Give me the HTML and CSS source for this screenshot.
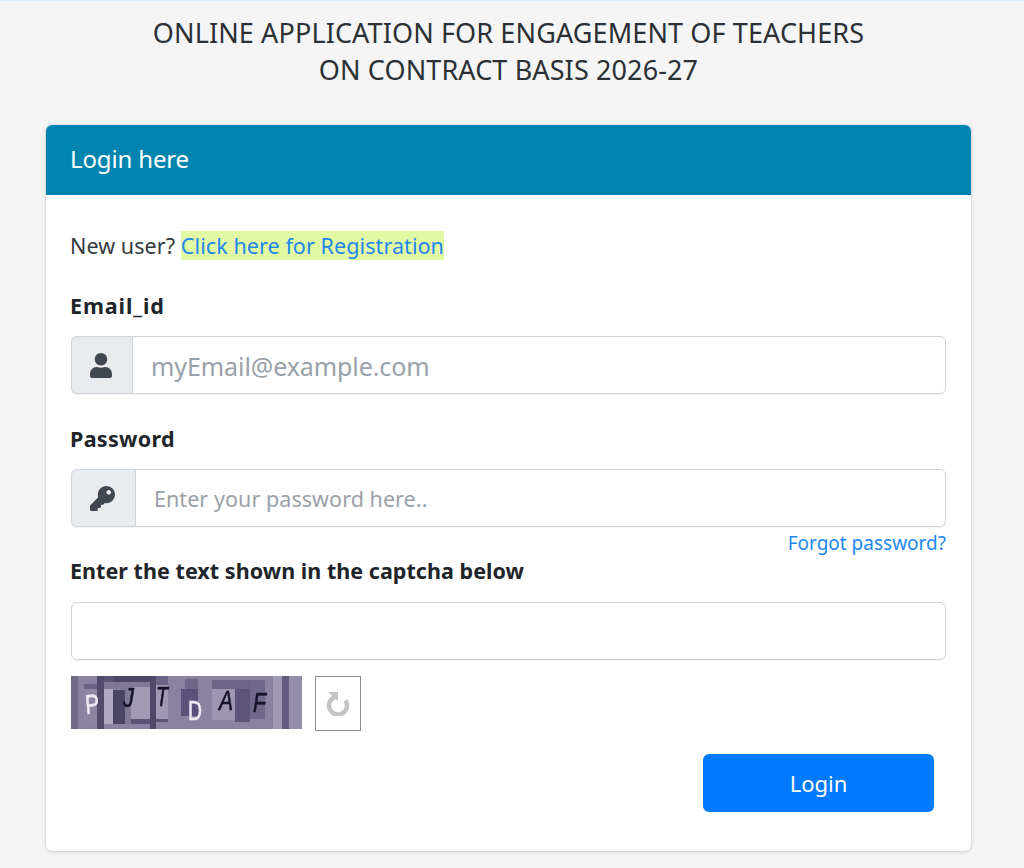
FILE: index.html
```html
<!DOCTYPE html>
<html lang="en">
<head>
<meta charset="utf-8">
<title>Login</title>
<link rel="stylesheet" href="styles.css">
</head>
<body>
<main class="page">
  <h1 class="title">ONLINE APPLICATION FOR ENGAGEMENT OF TEACHERS<br>ON CONTRACT BASIS 2026-27</h1>
  <section class="card">
    <header class="card-head">Login here</header>
    <form class="card-body">
      <p class="newuser">New user? <a class="reg" href="#">Click here for Registration</a></p>
      <label class="lbl lbl-email">Email_id</label>
      <div class="group">
        <span class="addon addon-user">
          <svg width="22" height="25" viewBox="0 0 448 512"><path fill="#3f4850" d="M224 256c70.700 0 128-57.300 128-128S294.700 0 224 0 96 57.300 96 128s57.300 128 128 128zm89.600 32h-16.700c-22.200 10.200-46.900 16-72.900 16s-50.600-5.800-72.900-16h-16.700C60.200 288 0 348.200 0 422.400V464c0 26.500 21.500 48 48 48h352c26.500 0 48-21.500 48-48v-41.600c0-74.200-60.200-134.400-134.400-134.400z"/></svg>
        </span>
        <input class="field field-email" placeholder="myEmail@example.com">
      </div>
      <label class="lbl lbl-pass">Password</label>
      <div class="group">
        <span class="addon addon-key">
          <svg width="25" height="25" viewBox="0 0 512 512"><path fill="#3f4850" d="M512 176.001C512 273.203 433.202 352 336 352c-11.220 0-22.190-1.062-32.827-3.069l-24.012 27.014A23.999 23.999 0 0 1 261.223 384H224v40c0 13.255-10.745 24-24 24h-40v40c0 13.255-10.745 24-24 24H24c-13.255 0-24-10.745-24-24v-78.059c0-6.365 2.529-12.470 7.029-16.971l161.802-161.802C163.108 213.814 160 195.271 160 176 160 78.798 238.797.001 335.999 0 433.488-.001 512 78.511 512 176.001zM336 128c0 26.510 21.490 48 48 48s48-21.490 48-48-21.490-48-48-48-48 21.490-48 48z"/></svg>
        </span>
        <input class="field field-pass" placeholder="Enter your password here..">
      </div>
      <div class="forgot-row"><a class="forgot" href="#">Forgot password?</a></div>
      <label class="lbl lbl-captcha">Enter the text shown in the captcha below</label>
      <input class="field field-captcha">
      <div class="captcha-row">
        <svg class="captcha" width="231" height="53" viewBox="0 0 231 53">
          <rect width="231" height="53" fill="#8a82a0"/>
          <rect x="0" width="7" height="53" fill="#6f6886"/>
          <rect x="13" y="8" width="14" height="5" fill="#6a6385"/>
          <rect x="13" y="13" width="14" height="33" fill="#8d85a2"/>
          <rect x="33" y="6" width="46" height="7" fill="#7f7896"/>
          <rect x="26" y="0" width="16" height="6" fill="#5a5375"/>
          <rect x="42" y="0" width="37" height="6" fill="#4d4667"/>
          <rect x="26" y="0" width="7" height="53" fill="#514a6a"/>
          <rect x="33" y="13" width="9" height="35" fill="#b0a9c0"/>
          <rect x="42" y="14" width="12" height="34" fill="#4b4565"/>
          <rect x="54" y="13" width="6" height="35" fill="#807996"/>
          <rect x="60" y="11" width="19" height="32" fill="#a19ab5"/>
          <rect x="60" y="43" width="19" height="5" fill="#5b5476"/>
          <rect x="79" y="0" width="6" height="53" fill="#4f4869"/>
          <rect x="85" y="0" width="12" height="9" fill="#6a6385"/>
          <rect x="85" y="9" width="12" height="34" fill="#a098b4"/>
          <rect x="85" y="43" width="12" height="3" fill="#5b5476"/>
          <rect x="114" y="3" width="13" height="10" fill="#6f6788"/>
          <rect x="110" y="13" width="17" height="27" fill="#5a5278"/>
          <rect x="141" y="4" width="38" height="9" fill="#6d6586"/>
          <rect x="141" y="13" width="23" height="31" fill="#9d95b1"/>
          <rect x="164" y="13" width="15" height="33" fill="#5d5578"/>
          <rect x="179" y="4" width="15" height="39" fill="#6f6889"/>
          <rect x="202" y="0" width="9" height="53" fill="#a19ab4"/>
          <rect x="211" y="0" width="7" height="53" fill="#655d80"/>
          <rect x="218" y="0" width="13" height="53" fill="#958eab"/>
          <text class="cap-t cap-w" x="15" y="38" textLength="14" lengthAdjust="spacingAndGlyphs" transform="rotate(-5 15 38)">P</text>
          <text class="cap-t cap-d cap-i" x="52" y="31" textLength="11" lengthAdjust="spacingAndGlyphs">J</text>
          <text class="cap-t cap-d cap-i" x="85" y="30" textLength="12" lengthAdjust="spacingAndGlyphs">T</text>
          <text class="cap-t cap-w" x="117" y="44" textLength="14" lengthAdjust="spacingAndGlyphs">D</text>
          <text class="cap-t cap-d cap-i" x="148" y="34" textLength="14" lengthAdjust="spacingAndGlyphs">A</text>
          <text class="cap-t cap-d cap-i" x="182" y="36" textLength="13" lengthAdjust="spacingAndGlyphs">F</text>
        </svg>
        <button class="refresh" type="button" aria-label="Refresh captcha">
          <svg class="refresh-icon" width="24" height="24" viewBox="0 0 24 24">
            <path class="refresh-arc" d="M19.400 8.300A9 9 0 1 1 11 4.500"/>
            <path class="refresh-head" d="M2 0h10v9z"/>
          </svg>
        </button>
      </div>
      <div class="submit-row"><button class="login" type="button">Login</button></div>
    </form>
  </section>
</main>
</body>
</html>
```

FILE: styles.css
```css
* { box-sizing: border-box; }
html, body { margin: 0; padding: 0; }
body {
  height: 868px;
  overflow: hidden;
  background: #f5f5f5;
  border-top: 1px solid #d6f0fb;
  font-family: "Noto Sans", "Open Sans", sans-serif;
  color: #212529;
}
.page { padding: 0 53px 0 46px; }
.title {
  margin: 13px 0 0;
  height: 111px;
  text-align: center;
  font-weight: 400;
  font-size: 27px;
  line-height: 37px;
  color: #2b3035;
  letter-spacing: 0.12px;
}
.card {
  background: #fff;
  border-radius: 6px;
  box-shadow: 0 0 2px rgba(0,0,0,.12), 0 1px 4px rgba(0,0,0,.15);
  height: 726px;
  overflow: hidden;
}
.card-head {
  height: 70px;
  background: #0284b0;
  color: #fff;
  font-size: 24px;
  line-height: 68px;
  padding-left: 24px;
  letter-spacing: -0.15px;
}
.card-body { padding: 0 25px; display: flex; flex-direction: column; }
.newuser {
  margin: 37px 0 0 -1px;
  font-size: 21.500px;
  line-height: 28px;
  letter-spacing: 0.08px;
  color: #343a40;
}
.reg { background: #e2f9a4; color: #1e88f0; text-decoration: none; }
.lbl {
  display: block;
  margin-left: -1px;
  font-weight: 700;
  font-size: 21.500px;
  line-height: 28px;
  letter-spacing: 0.04px;
  color: #212529;
}
.lbl-email { margin-top: 32px; letter-spacing: 0.9px; }
.lbl-pass { margin-top: 31px; letter-spacing: 0.3px; }
.lbl-captcha { margin-top: -1px; }
.group { display: flex; height: 58px; margin-top: 16px; }
.addon {
  display: flex;
  align-items: center;
  justify-content: center;
  background: #e9ecef;
  border: 1px solid #ced4da;
  border-right: 0;
  border-radius: 6px 0 0 6px;
  box-shadow: 0 1px 1px rgba(0,0,0,.05);
  flex: none;
}
.addon-user { width: 61px; padding-right: 2px; }
.addon-key { width: 64px; padding-right: 2px; }
.field {
  display: block;
  border: 1px solid #ced4da;
  background: #fff;
  font-family: inherit;
  padding: 0 18px;
  outline: none;
  box-shadow: 0 1px 1px rgba(0,0,0,.05);
}
.group .field { flex: 1; min-width: 0; border-radius: 0 6px 6px 0; }
.field-email { font-size: 25px; letter-spacing: -0.08px; padding-top: 2px; }
.field-pass { font-size: 21.500px; letter-spacing: 0.06px; }
.field::placeholder { color: #9aa1a8; opacity: 1; }
.forgot-row { text-align: right; height: 31px; line-height: 32px; }
.forgot { font-size: 19px; color: #1e88f0; text-decoration: none; }
.field-captcha { width: 100%; height: 58px; margin-top: 17px; border-radius: 6px; }
.captcha-row { display: flex; align-items: flex-start; gap: 13px; margin-top: 16px; height: 55px; }
.captcha { display: block; flex: none; filter: blur(0.4px); }
.cap-t { font-family: "Liberation Sans", sans-serif; font-size: 27px; }
.cap-w { fill: #efeaf6; stroke: #efeaf6; stroke-width: 0.6px; }
.cap-d { fill: #16122a; stroke: #16122a; stroke-width: 0.6px; }
.cap-i { font-style: italic; }
.refresh {
  width: 46px;
  height: 55px;
  padding: 0;
  background: #fff;
  border: 1px solid #8f8f8f;
  display: flex;
  align-items: center;
  justify-content: center;
}
.refresh-icon { display: block; filter: blur(0.5px); }
.refresh-arc { fill: none; stroke: #c4c4c4; stroke-width: 4.5px; }
.refresh-head { fill: #c4c4c4; }
.submit-row { display: flex; justify-content: flex-end; padding-right: 12px; margin-top: 23px; }
.login {
  width: 231px;
  height: 58px;
  background: #007bff;
  color: #fff;
  border: 0;
  border-radius: 6px;
  font-family: inherit;
  font-size: 22px;
}
```
